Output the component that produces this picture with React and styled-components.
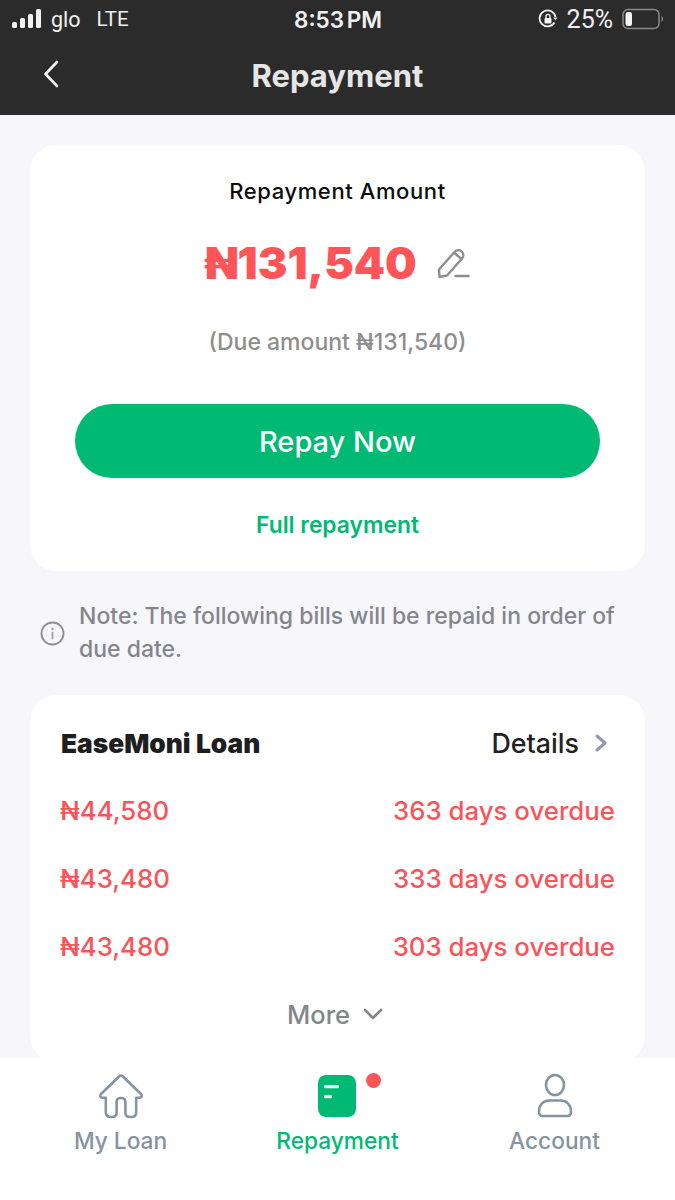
import React from "react";
import styled, { createGlobalStyle } from "styled-components";

const Global = createGlobalStyle`
  html, body { margin: 0; padding: 0; background: #f6f6fb; }
  body { font-family: Inter, "Noto Sans", sans-serif; }
  * { box-sizing: border-box; }
`;

const Page = styled.div`
  width: 675px;
  height: 1200px;
  overflow: hidden;
  display: flex;
  flex-direction: column;
  background: #f6f6fb;
  position: relative;
`;
const TopBar = styled.header`
  height: 115px;
  flex: none;
  background: #2b2b2b;
  display: flex;
  flex-direction: column;
`;
const StatusBar = styled.div`
  height: 38px;
  display: grid;
  grid-template-columns: 1fr auto 1fr;
  align-items: center;
  padding: 0 11px 0 12px;
  color: #f0f0f0;
  font-size: 20px;
`;
const StatusLeft = styled.div`
  display: flex;
  align-items: center;
  gap: 7px;
`;
const Carrier = styled.span`
  font-family: Roboto, sans-serif;
  font-size: 21.5px;
  margin-right: 9px;
`;
const Lte = styled.span`
  font-family: Roboto, sans-serif;
  font-size: 20.5px;
`;
const Clock = styled.span`
  font-weight: 600;
  font-size: 22.5px;
  word-spacing: -3px;
  white-space: pre;
`;
const StatusRight = styled.div`
  display: flex;
  align-items: center;
  justify-content: flex-end;
  gap: 9px;
  font-family: Roboto, sans-serif;
  font-size: 25px;
`;
const NavRow = styled.div`
  flex: 1;
  display: flex;
  align-items: center;
  justify-content: center;
  position: relative;
  padding-bottom: 2px;
`;
const BackButton = styled.span`
  position: absolute;
  left: 42px;
  top: 22px;
  display: flex;
`;
const NavTitle = styled.h1`
  margin: 0;
  color: #e6e6e6;
  font-size: 31px;
  font-weight: 700;
`;
const Content = styled.main`
  flex: 1;
  min-height: 0;
  padding: 30px 30px 0;
  display: flex;
  flex-direction: column;
`;
const AmountCard = styled.section`
  height: 426px;
  flex: none;
  background: #fff;
  border-radius: 26px;
  display: flex;
  flex-direction: column;
  align-items: center;
  padding-top: 33px;
`;
const CardLabel = styled.div`
  color: #0c0c0c;
  font-size: 22px;
  font-weight: 500;
  line-height: 26px;
  letter-spacing: 0.6px;
`;
const AmountRow = styled.div`
  margin-top: 34px;
  height: 50px;
  display: flex;
  align-items: center;
  gap: 20px;
  margin-left: -1px;
`;
const Amount = styled.div`
  color: #ff5558;
  font-size: 44.5px;
  font-weight: 900;
`;
const DueNote = styled.div`
  margin-top: 40px;
  color: #8e8e8e;
  font-size: 23px;
  font-weight: 500;
  line-height: 28px;
`;
const RepayButton = styled.button`
  margin-top: 48px;
  width: 525px;
  height: 74px;
  border: 0;
  border-radius: 37px;
  background: #00ba74;
  color: #fff;
  font: 500 29px Inter, sans-serif;
`;
const FullLink = styled.div`
  margin-top: 34px;
  color: #00ba74;
  font-size: 22.8px;
  font-weight: 600;
  line-height: 26px;
`;
const Note = styled.div`
  display: flex;
  align-items: center;
  margin: 29px 0 0 10px;
  height: 66px;
  gap: 14px;
  color: #85858c;
  font-size: 23px;
  font-weight: 500;
  line-height: 33px;
`;
const BillCard = styled.section`
  margin-top: 29px;
  height: 367px;
  flex: none;
  background: #fff;
  border-radius: 26px;
  padding: 30px 30px 0 31px;
`;
const BillHead = styled.div`
  display: flex;
  align-items: center;
  justify-content: space-between;
  height: 36px;
`;
const BillTitle = styled.div`
  color: #1e1e1e;
  font-size: 26.3px;
  font-weight: 900;
`;
const DetailsLink = styled.div`
  display: flex;
  align-items: center;
  gap: 16px;
  padding-right: 8px;
  color: #222;
  font-size: 26.8px;
  font-weight: 500;
`;
const BillRows = styled.div`
  margin-top: 15px;
  margin-left: -1px;
  display: flex;
  flex-direction: column;
`;
const BillRow = styled.div`
  height: 68px;
  display: flex;
  align-items: center;
  justify-content: space-between;
  color: #fb5359;
  font-size: 25.8px;
  font-weight: 500;
`;
const MoreRow = styled.div`
  height: 68px;
  display: flex;
  align-items: center;
  justify-content: center;
  gap: 13px;
  padding-right: 5px;
  color: #85858c;
  font-size: 25.5px;
  font-weight: 500;
`;
const TabBar = styled.nav`
  position: absolute;
  left: 0;
  top: 1058px;
  width: 675px;
  height: 142px;
  background: #fff;
  display: grid;
  grid-template-columns: repeat(3, 217px);
  justify-content: center;
  padding-top: 15px;
`;
const Tab = styled.div`
  display: flex;
  flex-direction: column;
  align-items: center;
  color: ${(p) => (p.$active ? "#00ba74" : "#8593a3")};
  font-size: 22.7px;
  font-weight: 500;
`;
const TabIcon = styled.div`
  height: 46px;
  width: 46px;
  position: relative;
  margin-bottom: 8px;
`;
const Dot = styled.span`
  position: absolute;
  left: 51px;
  top: 0;
  width: 15px;
  height: 15px;
  border-radius: 50%;
  background: #ff5558;
`;

const Signal = () => (
  <svg width="32" height="20" viewBox="0 0 32 20">
    <rect x="0" y="13" width="5" height="6" rx="1.5" fill="#f2f2f2" />
    <rect x="8" y="9" width="5" height="10" rx="1.5" fill="#f2f2f2" />
    <rect x="16" y="5" width="5" height="14" rx="1.5" fill="#f2f2f2" />
    <rect x="24" y="0" width="5" height="19" rx="1.5" fill="#f2f2f2" />
  </svg>
);
const RotationLock = () => (
  <svg width="20" height="20" viewBox="0 0 20 20" fill="none">
    <path d="M16.5 13.5A8 8 0 1 1 17.5 8" stroke="#f2f2f2" strokeWidth="1.8" />
    <path d="M15 8.5h4.5l-2.2 2.7z" fill="#f2f2f2" />
    <rect x="6.5" y="9" width="7" height="5.5" rx="1" fill="#f2f2f2" />
    <path d="M8 9V7.4a2 2 0 0 1 4 0V9" stroke="#f2f2f2" strokeWidth="1.4" />
  </svg>
);
const Battery = () => (
  <svg width="42" height="22" viewBox="0 0 42 22" fill="none">
    <rect x="1" y="1.5" width="36" height="19" rx="5" stroke="#8a8a8a" strokeWidth="1.5" />
    <rect x="3.5" y="4" width="6.5" height="14" rx="2.5" fill="#f4f4f4" />
    <path d="M39.5 8v6a3 3 0 0 0 1.5-3 3 3 0 0 0-1.5-3z" fill="#8a8a8a" />
  </svg>
);
const BackIcon = () => (
  <svg width="18" height="28" viewBox="0 0 18 28" fill="none">
    <path d="M15 2 3.5 14 15 26" stroke="#f4f4f4" strokeWidth="2.6" strokeLinecap="round" strokeLinejoin="round" />
  </svg>
);
const PenIcon = () => (
  <svg width="33" height="31" viewBox="0 0 33 31" fill="none" stroke="#8e8e8e" strokeWidth="2.4" strokeLinecap="round" strokeLinejoin="round">
    <path d="M2 21.5 17.5 4a5 5 0 0 1 7.6 6.5L10 27.5l-7.5 1.5z" />
    <path d="M18 5.5 24.5 11" />
    <path d="M18.5 28h13" />
  </svg>
);
const InfoIcon = () => (
  <svg width="25" height="25" viewBox="0 0 25 25" fill="none" style={{ flex: "none" }}>
    <circle cx="12.5" cy="12.5" r="11" stroke="#8e8e94" strokeWidth="1.8" />
    <circle cx="12.5" cy="8" r="1.2" fill="#a0a0a6" />
    <path d="M12.5 11.5v6" stroke="#a0a0a6" strokeWidth="1.8" strokeLinecap="round" />
  </svg>
);
const ChevronRight = () => (
  <svg width="12" height="18" viewBox="0 0 12 18" fill="none">
    <path d="M2 2l8 7-8 7" stroke="#919bab" strokeWidth="3" strokeLinecap="round" strokeLinejoin="round" />
  </svg>
);
const ChevronDown = () => (
  <svg width="20" height="12" viewBox="0 0 20 12" fill="none">
    <path d="M2 2l8 8 8-8" stroke="#85858c" strokeWidth="2.6" strokeLinecap="round" strokeLinejoin="round" />
  </svg>
);
const HomeIcon = () => (
  <svg width="46" height="46" viewBox="0 0 46 46" fill="none" stroke="#8593a3" strokeWidth="2.6" strokeLinejoin="round" strokeLinecap="round">
    <path d="M23 2.5c-.8 0-1.3.4-1.9 1L3 21c-1.6 1.8-.7 3.8 1.6 3.8h3.2v14.5c0 3 1.8 4.7 4.7 4.7h1.6c3 0 4.5-1.6 4.5-4.5v-11c0-2 1.6-3.5 4.4-3.5s4.4 1.5 4.4 3.5v11c0 2.9 1.5 4.5 4.5 4.5h1.6c2.9 0 4.7-1.7 4.7-4.7V24.8h3.2c2.3 0 3.2-2 1.6-3.8L24.9 3.5c-.6-.6-1.1-1-1.9-1z" />
  </svg>
);
const BillIcon = () => (
  <svg width="46" height="46" viewBox="0 0 46 46">
    <rect x="3" y="2" width="38" height="42" rx="8" fill="#00ba74" />
    <rect x="9" y="12" width="15" height="3.2" rx="1.2" fill="#e8fbf3" />
    <rect x="9" y="22" width="8" height="3.2" rx="1.2" fill="#e8fbf3" />
  </svg>
);
const PersonIcon = () => (
  <svg width="46" height="46" viewBox="0 0 46 46" fill="none" stroke="#8593a3" strokeWidth="2.6">
    <ellipse cx="23" cy="12" rx="9" ry="10" />
    <path d="M17 27.5h12c6 0 10 5 10 11 0 3-1.5 4.5-3.5 4.5h-25c-2 0-3.500-1.500-3.500-4.500 0-6 4-11 10-11z" />
  </svg>
);

const bills = [
  ["₦44,580", "363 days overdue"],
  ["₦43,480", "333 days overdue"],
  ["₦43,480", "303 days overdue"],
];

export default function App() {
  return (
    <Page>
      <Global />
      <TopBar>
        <StatusBar>
          <StatusLeft>
            <Signal />
            <Carrier>glo</Carrier>
            <Lte>LTE</Lte>
          </StatusLeft>
          <Clock>8:53 PM</Clock>
          <StatusRight>
            <RotationLock />
            <span>25%</span>
            <Battery />
          </StatusRight>
        </StatusBar>
        <NavRow>
          <BackButton>
            <BackIcon />
          </BackButton>
          <NavTitle>Repayment</NavTitle>
        </NavRow>
      </TopBar>
      <Content>
        <AmountCard>
          <CardLabel>Repayment Amount</CardLabel>
          <AmountRow>
            <Amount>₦131,540</Amount>
            <PenIcon />
          </AmountRow>
          <DueNote>(Due amount ₦131,540)</DueNote>
          <RepayButton>Repay Now</RepayButton>
          <FullLink>Full repayment</FullLink>
        </AmountCard>
        <Note>
          <InfoIcon />
          <span>Note: The following bills will be repaid in order of due date.</span>
        </Note>
        <BillCard>
          <BillHead>
            <BillTitle>EaseMoni Loan</BillTitle>
            <DetailsLink>
              Details
              <ChevronRight />
            </DetailsLink>
          </BillHead>
          <BillRows>
            {bills.map(([amount, status], i) => (
              <BillRow key={i}>
                <span>{amount}</span>
                <span>{status}</span>
              </BillRow>
            ))}
            <MoreRow>
              More
              <ChevronDown />
            </MoreRow>
          </BillRows>
        </BillCard>
      </Content>
      <TabBar>
        <Tab>
          <TabIcon>
            <HomeIcon />
          </TabIcon>
          My Loan
        </Tab>
        <Tab $active>
          <TabIcon>
            <BillIcon />
            <Dot />
          </TabIcon>
          Repayment
        </Tab>
        <Tab>
          <TabIcon>
            <PersonIcon />
          </TabIcon>
          Account
        </Tab>
      </TabBar>
    </Page>
  );
}
